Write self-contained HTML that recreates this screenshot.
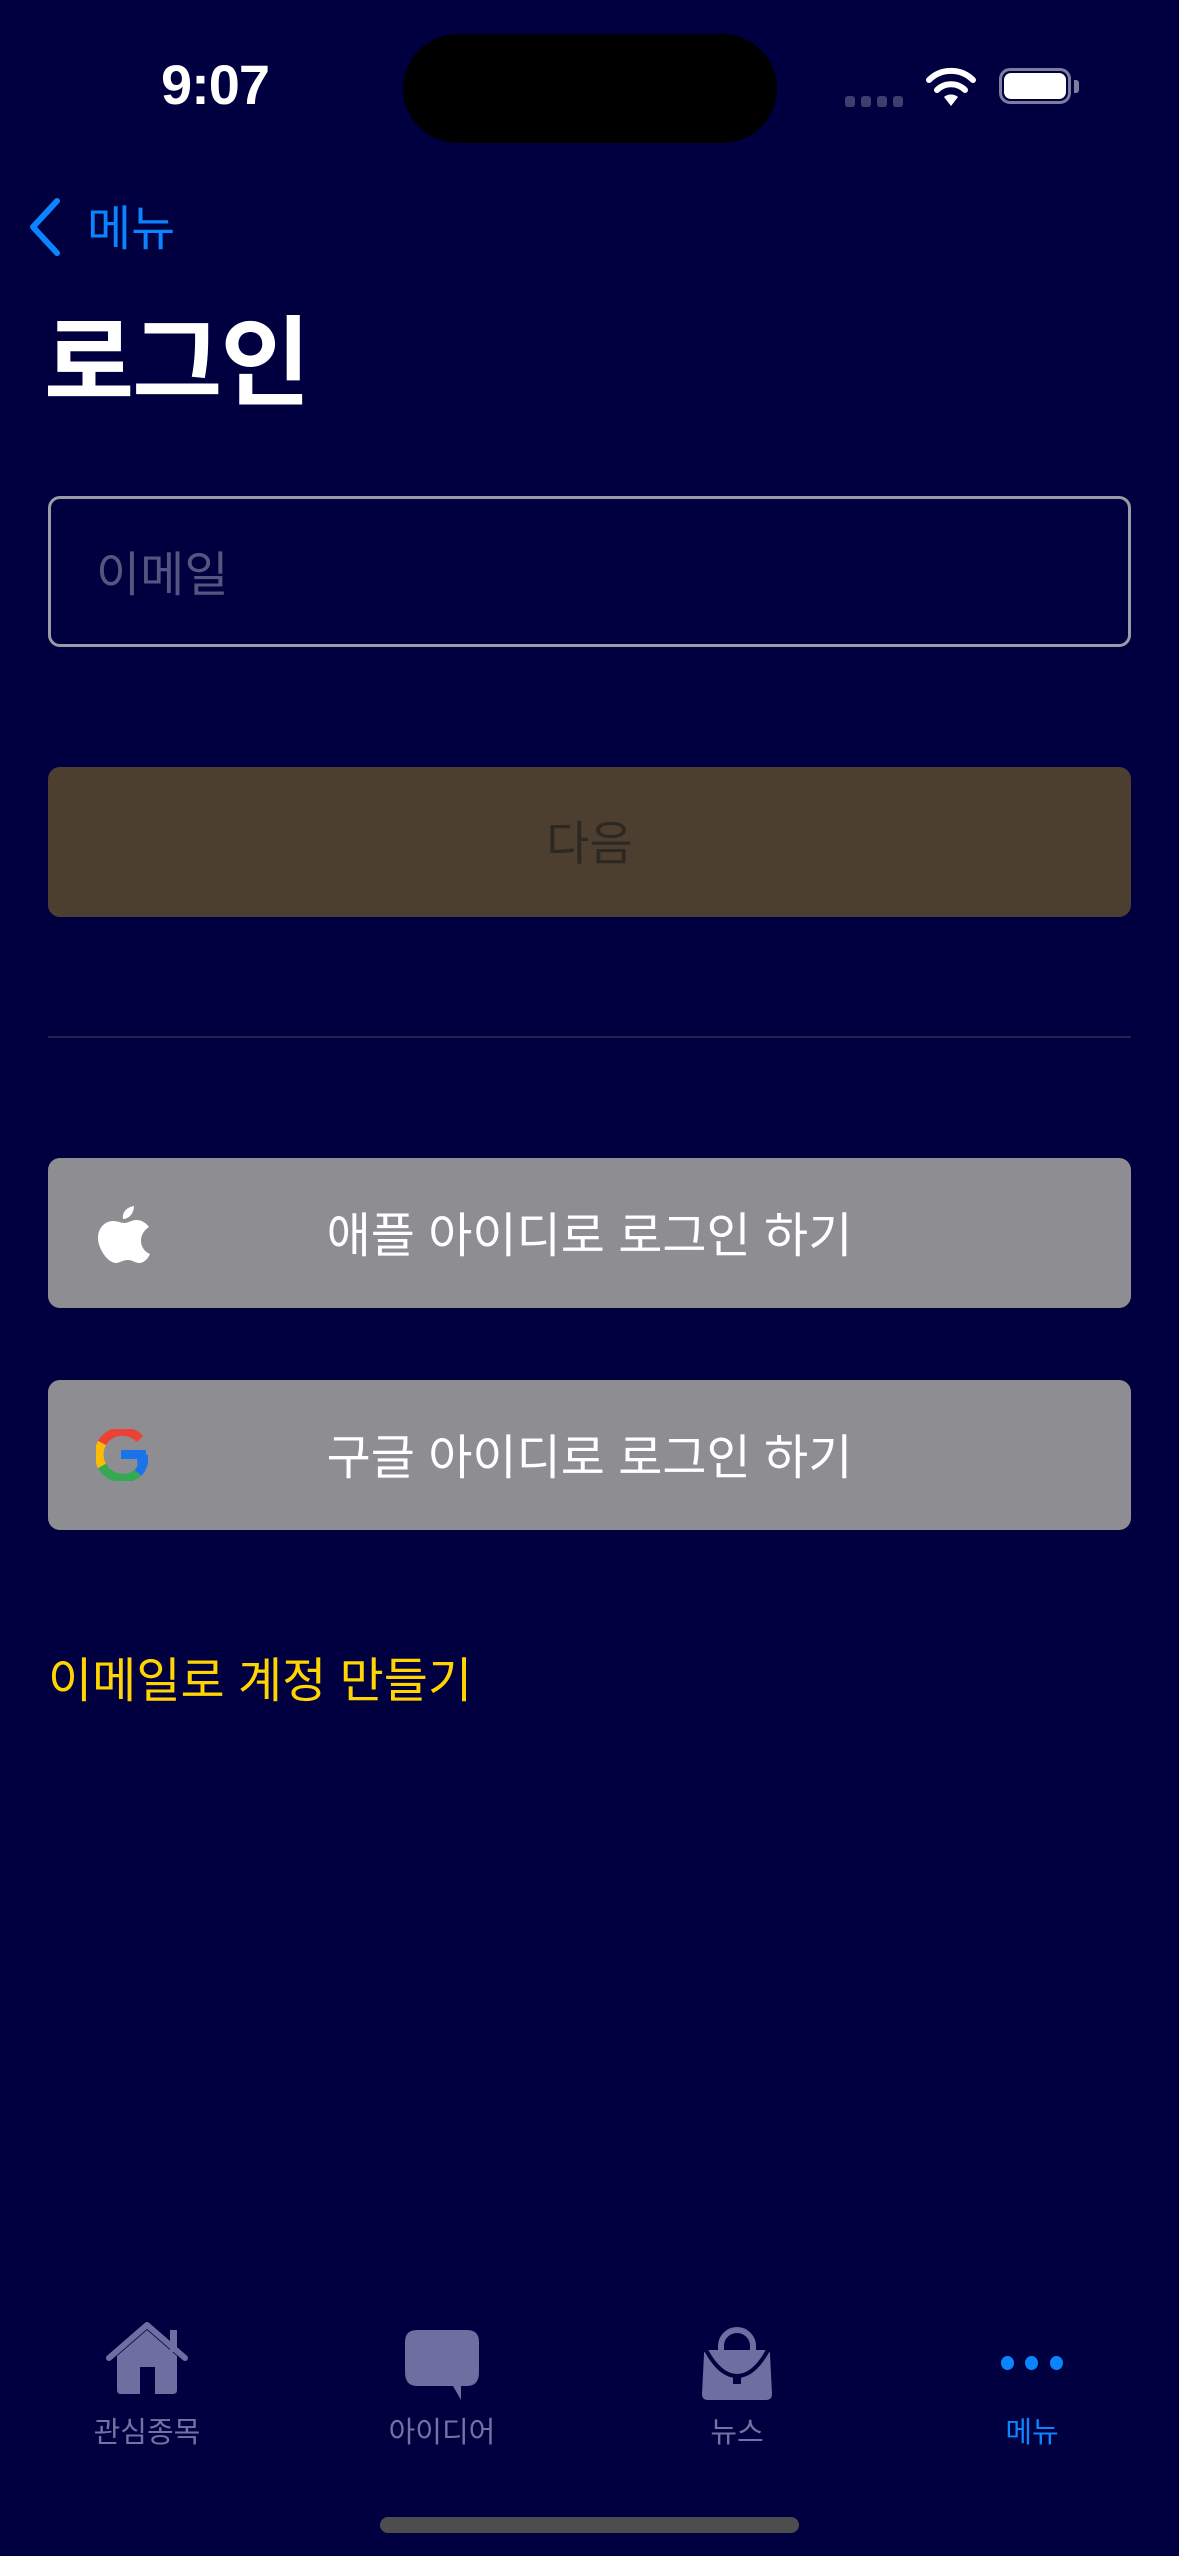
<!DOCTYPE html>
<html><head><meta charset="utf-8">
<style>
html,body{margin:0;padding:0}
body{width:1179px;height:2556px;background:#000040;position:relative;overflow:hidden;font-family:"Liberation Sans","Noto Sans CJK KR",sans-serif;}
.abs{position:absolute}
.btn{position:absolute;left:48px;width:1083px;border-radius:12px}
.ct{position:absolute;left:0;right:0;text-align:center;white-space:nowrap}
.tab{position:absolute;width:200px;text-align:center;font-size:29px;color:#7373a3;top:2409px}
</style></head><body>
<div class="abs" style="left:150px;top:52px;width:130px;text-align:center;font-size:56px;font-weight:bold;color:#fff;letter-spacing:-1px">9:07</div>
<div class="abs" style="left:403px;top:34px;width:374px;height:109px;border-radius:55px;background:#000"></div>
<div class="abs" style="left:845px;top:96px;width:10px;height:11px;border-radius:3px;background:#3d3d6e"></div>
<div class="abs" style="left:861px;top:96px;width:10px;height:11px;border-radius:3px;background:#3d3d6e"></div>
<div class="abs" style="left:877px;top:96px;width:10px;height:11px;border-radius:3px;background:#3d3d6e"></div>
<div class="abs" style="left:893px;top:96px;width:10px;height:11px;border-radius:3px;background:#3d3d6e"></div>
<svg class="abs" style="left:924px;top:66px" width="54" height="42" viewBox="0 0 54 42">
<path d="M27 40 L20 31 A11 11 0 0 1 34 31 Z" fill="#fff"/>
<path d="M13 24 A20 20 0 0 1 41 24" stroke="#fff" stroke-width="6" fill="none" stroke-linecap="round"/>
<path d="M5 14 A31 31 0 0 1 49 14" stroke="#fff" stroke-width="6" fill="none" stroke-linecap="round"/>
</svg>
<div class="abs" style="left:999px;top:68px;width:72px;height:36px;border:3px solid #7d7da0;border-radius:11px;box-sizing:border-box"></div>
<div class="abs" style="left:1004px;top:73px;width:62px;height:26px;border-radius:7px;background:#fff"></div>
<div class="abs" style="left:1074px;top:80px;width:5px;height:13px;border-radius:0 3px 3px 0;background:#7d7da0"></div>

<svg class="abs" style="left:26px;top:197px" width="40" height="60" viewBox="0 0 40 60"><path d="M31 4 L7 30 L31 56" stroke="#0a84ff" stroke-width="6" fill="none" stroke-linecap="round" stroke-linejoin="round"/></svg>
<div class="abs" style="left:87px;top:189px;font-size:48px;color:#0a84ff">메뉴</div>
<div class="abs" style="left:44px;top:284px;font-size:98px;font-weight:bold;color:#fff;letter-spacing:-2px">로그인</div>

<div class="btn" style="top:496px;height:151px;border:3px solid #9b9ba8;box-sizing:border-box;border-radius:12px"></div>
<div class="abs" style="left:96px;top:535px;font-size:48px;color:#55557f">이메일</div>

<div class="btn" style="top:767px;height:150px;background:#4c3f2f"><div class="ct" style="top:38px;font-size:47px;color:#2d2822">다음</div></div>
<div class="abs" style="left:48px;top:1036px;width:1083px;height:2px;background:#22224f"></div>

<div class="btn" style="top:1158px;height:150px;background:#8e8d92">
<svg class="abs" style="left:48px;top:47px" width="56" height="58" viewBox="0 0 56 58"><path d="M38 1 C38 8 33 14 27 14 C26 7 31 2 38 1 Z M28 18 C32 18 36 15 40 15 C46 15 50 18 53 22 C47 26 45 31 45 36 C45 42 49 47 54 49 C51 56 46 58 43 58 C39 58 37 55 32 55 C26 55 24 58 20 58 C12 58 2 44 2 33 C2 23 9 16 17 16 C22 16 25 18 28 18 Z" fill="#fff"/></svg>
<div class="ct" style="top:38px;font-size:48px;color:#fff">애플 아이디로 로그인 하기</div></div>

<div class="btn" style="top:1380px;height:150px;background:#8e8d92">
<svg class="abs" style="left:48px;top:49px" width="52" height="52" viewBox="0 0 52 52">
<path d="M44 10 A24 24 0 0 0 6 14" stroke="#ea4335" stroke-width="9" fill="none"/>
<path d="M6 14 A24 24 0 0 0 6 37" stroke="#fbbc05" stroke-width="9" fill="none"/>
<path d="M6 37 A24 24 0 0 0 42 44" stroke="#34a853" stroke-width="9" fill="none"/>
<path d="M42 44 A24 24 0 0 0 50 26 L50 21 L25 21 L25 30 L41 30" stroke="none" fill="#1a73e8"/>
<path d="M42 44 A24 24 0 0 0 48 26" stroke="#1a73e8" stroke-width="9" fill="none"/>
</svg>
<div class="ct" style="top:38px;font-size:48px;color:#fff">구글 아이디로 로그인 하기</div></div>

<div class="abs" style="left:48px;top:1641px;font-size:48px;color:#ffd400">이메일로 계정 만들기</div>

<svg class="abs" style="left:103px;top:2322px" width="88" height="74" viewBox="0 0 88 74">
<path d="M6 36 L44 3 L82 36" stroke="#6e6ea0" stroke-width="6" fill="none" stroke-linecap="round" stroke-linejoin="round"/>
<rect x="67" y="8" width="7" height="22" fill="#6e6ea0"/>
<path d="M14 34 L44 8 L74 34 L74 68 Q74 72 70 72 L18 72 Q14 72 14 68 Z" fill="#6e6ea0"/>
<rect x="37" y="45" width="15" height="27" fill="#000040"/>
</svg>
<svg class="abs" style="left:403px;top:2330px" width="78" height="72" viewBox="0 0 78 72"><path d="M14 0 L64 0 Q76 0 76 12 L76 42 Q76 56 64 56 L58 56 L58 70 L50 56 L14 56 Q2 56 2 42 L2 12 Q2 0 14 0 Z" fill="#6e6ea0"/></svg>
<svg class="abs" style="left:700px;top:2326px" width="74" height="76" viewBox="0 0 74 76">
<path d="M21 26 L21 20 A16 16 0 0 1 53 20 L53 26" stroke="#6e6ea0" stroke-width="6" fill="none"/>
<path d="M4 28 Q4 24 8 24 L66 24 Q70 24 70 28 L72 68 Q72 74 66 74 L8 74 Q2 74 2 68 Z" fill="#6e6ea0"/>
<path d="M6 24 Q20 50 37 50 Q54 50 68 24" stroke="#000040" stroke-width="4" fill="none"/>
<rect x="33" y="50" width="8" height="8" fill="#000040"/>
</svg>
<div class="abs" style="left:1001px;top:2356px;width:13px;height:14px;border-radius:50%;background:#0a84ff"></div>
<div class="abs" style="left:1025px;top:2356px;width:13px;height:14px;border-radius:50%;background:#0a84ff"></div>
<div class="abs" style="left:1050px;top:2356px;width:13px;height:14px;border-radius:50%;background:#0a84ff"></div>

<div class="tab" style="left:47px">관심종목</div>
<div class="tab" style="left:342px">아이디어</div>
<div class="tab" style="left:637px">뉴스</div>
<div class="tab" style="left:932px;color:#0a84ff">메뉴</div>

<div class="abs" style="left:380px;top:2517px;width:419px;height:16px;border-radius:8px;background:#4d4d4d"></div>
</body></html>
